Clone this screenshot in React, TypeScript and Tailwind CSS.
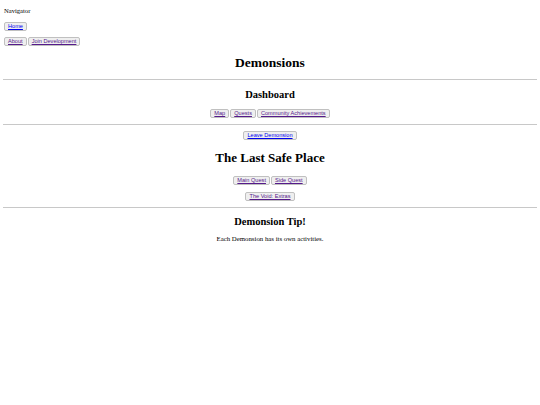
import React from 'react';

function Btn({ label, visited }: { label: string; visited?: boolean }) {
  return (
    <button className="inline-flex h-[9px] items-center rounded-[2px] border border-[#c0c0c0] bg-[#efefef] px-[3px] font-['Liberation_Sans',Arial,sans-serif] text-[5.6px] leading-none">
      <a className={visited ? 'text-[#551a8b] underline' : 'text-[#0000ee] underline'}>{label}</a>
    </button>
  );
}

function Hr() {
  return <hr className="mx-[3px] border-t border-[#c8c8c8]" />;
}

export default function App() {
  return (
    <div className="min-h-[405px] bg-white font-['Liberation_Serif','Times_New_Roman',serif] text-black">
      <div className="px-[4px] pt-[6px]">
        <div className="text-[6.6px] leading-[10px]">Navigator</div>
        <div className="mt-[6px] flex gap-[1px]">
          <Btn label="Home" />
        </div>
        <div className="mt-[6px] flex gap-[1px]">
          <Btn label="About" visited />
          <Btn label="Join Development" visited />
        </div>
      </div>
      <h1 className="mt-[8px] text-center text-[13.5px] font-bold leading-[18px]">Demonsions</h1>
      <div className="mt-[7px]">
        <Hr />
      </div>
      <h2 className="mt-[8px] text-center text-[10.5px] font-bold leading-[14px]">Dashboard</h2>
      <div className="mt-[7px] flex justify-center gap-[1px]">
        <Btn label="Map" visited />
        <Btn label="Quests" visited />
        <Btn label="Community Achievements" visited />
      </div>
      <div className="mt-[6px]">
        <Hr />
      </div>
      <div className="mt-[6px] flex justify-center">
        <Btn label="Leave Demonsion" />
      </div>
      <h1 className="mt-[9px] text-center text-[13px] font-bold leading-[18px]">The Last Safe Place</h1>
      <div className="mt-[9px] flex justify-center gap-[1px]">
        <Btn label="Main Quest" visited />
        <Btn label="Side Quest" visited />
      </div>
      <div className="mt-[7px] flex justify-center">
        <Btn label="The Void: Extras" visited />
      </div>
      <div className="mt-[6px]">
        <Hr />
      </div>
      <h2 className="mt-[7px] text-center text-[10.5px] font-bold leading-[14px]">Demonsion Tip!</h2>
      <p className="mt-[5px] text-center text-[6.8px] leading-[10px]">Each Demonsion has its own activities.</p>
    </div>
  );
}
